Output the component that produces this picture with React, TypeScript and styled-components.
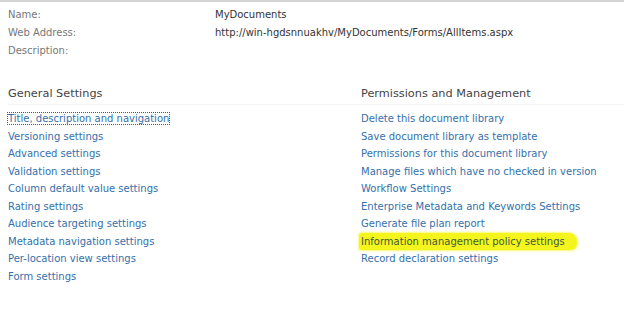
import styled, { createGlobalStyle } from 'styled-components'

const GlobalStyle = createGlobalStyle`
  html, body {
    margin: 0;
    padding: 0;
    background: #fff;
  }
  body {
    font-family: 'DejaVu Sans', Verdana, sans-serif;
    font-size: 10px;
    color: #444;
  }
`

const Page = styled.div`
  width: 624px;
  height: 311px;
  border-top: 2px solid #d4d4d4;
  box-sizing: border-box;
  overflow: hidden;
`

const Props = styled.div`
  display: grid;
  grid-template-columns: 207px 1fr;
  padding: 4px 0 0 8px;
`

const Label = styled.div`
  color: #777;
  line-height: 18px;
`

const Value = styled.div`
  color: #333;
  line-height: 18px;
  min-height: 18px;
`

const Columns = styled.div`
  display: grid;
  grid-template-columns: 353px 1fr;
  padding: 24px 0 0 8px;
`

const Section = styled.div`
  display: flex;
  flex-direction: column;
`

const Heading = styled.h3`
  margin: 0 0 5px;
  font-weight: normal;
  font-size: 11.3px;
  color: #444;
  line-height: 20px;
  border-bottom: 1px solid #f6f6f6;
`

const LinkList = styled.ul`
  list-style: none;
  margin: 0;
  padding: 0;
  display: flex;
  flex-direction: column;
`

const Item = styled.li`
  line-height: 17.5px;
  height: 17.5px;
`

const Link = styled.a<{ $focused?: boolean; $marked?: boolean }>`
  text-decoration: none;
  outline: ${p => (p.$focused ? '1px dotted #555' : 'none')};
  background: ${p => (p.$marked ? '#f5f51e' : 'transparent')};
  color: ${p => (p.$marked ? '#3d5a3a' : '#3470aa')};
  padding: ${p => (p.$marked ? '3px 12px 3px 2px' : '0')};
  margin-left: ${p => (p.$marked ? '-2px' : '0')};
  border-radius: ${p => (p.$marked ? '3px 8px 6px 2px' : '0')};
  box-shadow: ${p => (p.$marked ? '0 0 2px 1px rgba(245, 245, 30, 0.6)' : 'none')};
`

const general = [
  'Title, description and navigation',
  'Versioning settings',
  'Advanced settings',
  'Validation settings',
  'Column default value settings',
  'Rating settings',
  'Audience targeting settings',
  'Metadata navigation settings',
  'Per-location view settings',
  'Form settings',
]

const permissions = [
  'Delete this document library',
  'Save document library as template',
  'Permissions for this document library',
  'Manage files which have no checked in version',
  'Workflow Settings',
  'Enterprise Metadata and Keywords Settings',
  'Generate file plan report',
  'Information management policy settings',
  'Record declaration settings',
]

const App = () => {
  return (
    <>
      <GlobalStyle />
      <Page>
        <Props>
          <Label>Name:</Label>
          <Value>MyDocuments</Value>
          <Label>Web Address:</Label>
          <Value>http://win-hgdsnnuakhv/MyDocuments/Forms/AllItems.aspx</Value>
          <Label>Description:</Label>
          <Value></Value>
        </Props>
        <Columns>
          <Section>
            <Heading>General Settings</Heading>
            <LinkList>
              {general.map((t, i) => (
                <Item key={t}>
                  <Link href="#" $focused={i === 0}>{t}</Link>
                </Item>
              ))}
            </LinkList>
          </Section>
          <Section>
            <Heading>Permissions and Management</Heading>
            <LinkList>
              {permissions.map(t => (
                <Item key={t}>
                  <Link href="#" $marked={t.startsWith('Information')}>{t}</Link>
                </Item>
              ))}
            </LinkList>
          </Section>
        </Columns>
      </Page>
    </>
  )
}

export default App
